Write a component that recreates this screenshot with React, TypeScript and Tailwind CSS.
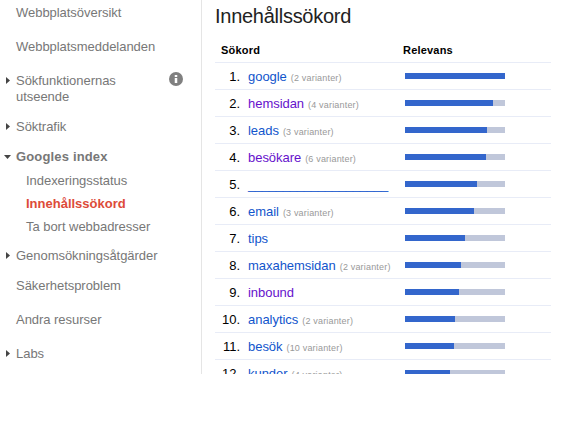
interface NavItem {
  label: string;
  width: string;
  spacing: string;
  arrow?: 'right' | 'down';
  info?: boolean;
}

interface Keyword {
  word: string;
  variants?: number;
  relevance: number;
  visited?: boolean;
  tight?: boolean;
}

const topItems: NavItem[] = [
  { label: 'Webbplatsöversikt', width: 'w-[150px]', spacing: 'mb-[18px]' },
  { label: 'Webbplatsmeddelanden', width: 'w-[150px]', spacing: 'mb-[18px]' },
  { label: 'Sökfunktionernas utseende', width: 'w-[120px]', spacing: 'mb-[14px]', arrow: 'right', info: true },
  { label: 'Söktrafik', width: 'w-[150px]', spacing: 'mb-[14px]', arrow: 'right' },
];

const bottomItems: NavItem[] = [
  { label: 'Genomsökningsåtgärder', width: 'w-[150px]', spacing: 'mb-[14px]', arrow: 'right' },
  { label: 'Säkerhetsproblem', width: 'w-[150px]', spacing: 'mb-[18px]' },
  { label: 'Andra resurser', width: 'w-[150px]', spacing: 'mb-[18px]' },
  { label: 'Labs', width: 'w-[150px]', spacing: '', arrow: 'right' },
];

const keywords: Keyword[] = [
  { word: 'google', variants: 2, relevance: 100 },
  { word: 'hemsidan', variants: 4, relevance: 88, visited: true },
  { word: 'leads', variants: 3, relevance: 82 },
  { word: 'besökare', variants: 6, relevance: 81, visited: true },
  { word: '____________________', relevance: 72, tight: true },
  { word: 'email', variants: 3, relevance: 69 },
  { word: 'tips', relevance: 60 },
  { word: 'maxahemsidan', variants: 2, relevance: 56 },
  { word: 'inbound', relevance: 54, visited: true },
  { word: 'analytics', variants: 2, relevance: 50 },
  { word: 'besök', variants: 10, relevance: 49 },
  { word: 'kunder', variants: 4, relevance: 45 },
];

function Arrow({ direction }: { direction?: 'right' | 'down' }) {
  return (
    <span className="w-4 h-4 shrink-0">
      {direction === 'right' && (
        <svg width="16" height="16" viewBox="0 0 16 16" fill="#444">
          <path d="M6 4L10 7.5L6 11Z" />
        </svg>
      )}
      {direction === 'down' && (
        <svg width="16" height="16" viewBox="0 0 16 16" fill="#444">
          <path d="M4 6H11L7.5 10Z" />
        </svg>
      )}
    </span>
  );
}

function InfoIcon() {
  return (
    <svg className="ml-auto mr-[18px] -mt-[1px] shrink-0" width="14" height="14" viewBox="0 0 14 14">
      <circle cx="7" cy="7" r="7" fill="#808080" />
      <path d="M5.75 3H8.25V5H5.75ZM5.75 6H8.25V11H5.75Z" fill="#fff" />
    </svg>
  );
}

function NavRow({ item }: { item: NavItem }) {
  return (
    <li className={`flex ${item.spacing}`}>
      <Arrow direction={item.arrow} />
      <a className={item.width}>{item.label}</a>
      {item.info && <InfoIcon />}
    </li>
  );
}

export default function App() {
  return (
    <div className="w-[576px] h-[426px] bg-white font-['Liberation_Sans',Arial,sans-serif] text-[13px] leading-4">
      <div className="flex h-[374px] overflow-hidden">
        <nav className="w-[202px] shrink-0 border-r border-[#e5e5e5] pt-[5px] text-[#777] tracking-[-0.04px]">
          <ul>
            {topItems.map((item) => <NavRow key={item.label} item={item} />)}
            <li className="mb-[13px]">
              <div className="flex font-bold tracking-[0.16px]">
                <Arrow direction="down" />
                <a>Googles index</a>
              </div>
              <ul className="pl-[26px] pt-2 space-y-[7px]">
                <li>Indexeringsstatus</li>
                <li className="font-bold text-[#dd4b39] tracking-normal">Innehållssökord</li>
                <li>Ta bort webbadresser</li>
              </ul>
            </li>
            {bottomItems.map((item) => <NavRow key={item.label} item={item} />)}
          </ul>
        </nav>

        <main className="w-[349px] pl-[13px]">
          <h1 className="h-[38px] pt-[4px] text-[20px] leading-6 tracking-[-0.27px] text-[#222]">Innehållssökord</h1>
          <div className="flex h-[25px] border-b border-[#e8ecf7] pt-1 pl-[6px] text-[11px] font-bold tracking-[0.2px] text-black">
            <span className="w-[182px]">Sökord</span>
            <span>Relevans</span>
          </div>
          {keywords.map((k, i) => (
            <div key={k.word} className="flex h-[27px] border-b border-[#e8ecf7] pt-[6px] whitespace-nowrap">
              <span className="w-[25px] text-right text-black">{i + 1}.</span>
              <span className={`w-[157px] ml-2 ${k.tight ? 'tracking-[-0.23px]' : 'tracking-[-0.04px]'}`}>
                <a className={k.visited ? 'text-[#6611cc]' : 'text-[#1155cc]'}>{k.word}</a>
                {k.variants && (
                  <span className="ml-1 text-[9px] tracking-[0.18px] text-[#999]">({k.variants} varianter)</span>
                )}
              </span>
              <span className="mt-1 h-[6px] w-[100px] bg-[#c0c7da]">
                <span className="block h-full bg-[#3366cc]" style={{ width: `${k.relevance}%` }} />
              </span>
            </div>
          ))}
        </main>
      </div>
    </div>
  );
}
